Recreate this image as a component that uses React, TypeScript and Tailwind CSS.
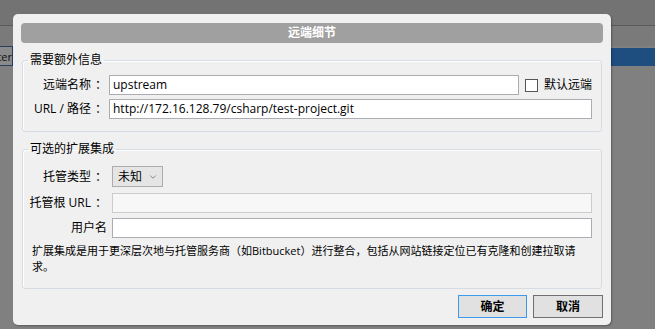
import { ChevronDown } from 'lucide-react';

const font = { fontFamily: '"Open Sans", "Noto Sans CJK SC", sans-serif' };

const Field = ({ value = '', disabled = false, className = '' }: { value?: string; disabled?: boolean; className?: string }) => (
  <div
    className={`h-[20px] border flex items-center pl-[3px] text-[12px] text-black leading-[18px] ${
      disabled ? 'bg-[#f7f7f7] border-[#cccccc]' : 'bg-white border-[#abadb3]'
    } ${className}`}
  >
    {value}
  </div>
);

const Label = ({ text, colon = true }: { text: string; colon?: boolean }) => (
  <div className="w-[84px] text-right leading-[16px] whitespace-nowrap">
    {text}
    {colon && <span className="pl-[4px]">：</span>}
  </div>
);

export default function App() {
  return (
    <div
      className="relative w-[655px] h-[329px] overflow-hidden bg-[#808080] text-[12px] text-black"
      style={font}
    >
      {/* window behind the dialog */}
      <div className="h-[26px] bg-[#737373] border-b border-[#5a5a5a]" />
      <div className="h-[20px] bg-[#7a7a7a]" />
      <div className="flex h-[20px]">
        <div className="w-[13px] bg-[#8a8a8a] border border-l-0 border-[#22415f] overflow-hidden flex items-center justify-end text-[#111] text-[11px] leading-none">
          ter
        </div>
        <div className="flex-1 bg-[#1d4e7f] mt-[2px] h-[18px]" />
      </div>

      {/* dialog */}
      <div className="absolute left-[13px] top-[14px] w-[598px] h-[311px] rounded-[5px] bg-[#f0f0f0] px-[8px] pt-[9px] flex flex-col shadow-[1px_1px_2px_rgba(0,0,0,0.3)]">
        <div className="h-[20px] rounded-[4px] bg-[#a0a0a0] flex items-center justify-center text-white font-bold text-[12px] leading-none">
          远端细节
        </div>

        <fieldset className="mx-[1px] mt-[9px] border border-[#d5dce3] rounded-[3px] shadow-[inset_1px_1px_0_#fff] pb-[12px]">
          <legend className="ml-[5px] px-[2px] leading-[16px]">需要额外信息</legend>
          <div className="flex flex-col gap-[4px] pt-[7px] pr-[9px]">
            <div className="flex items-center">
              <Label text="远端名称" />
              <Field value="upstream" className="ml-[2px] w-[410px]" />
              <div className="ml-[6px] w-[13px] h-[13px] border border-[#555] bg-white" />
              <div className="ml-[6px] leading-[16px]">默认远端</div>
            </div>
            <div className="flex items-center">
              <Label text="URL / 路径" />
              <Field value="http://172.16.128.79/csharp/test-project.git" className="ml-[2px] flex-1" />
            </div>
          </div>
        </fieldset>

        <fieldset className="mx-[1px] mt-[9px] border border-[#d5dce3] rounded-[3px] shadow-[inset_1px_1px_0_#fff] pb-[13px]">
          <legend className="ml-[5px] px-[2px] leading-[16px]">可选的扩展集成</legend>
          <div className="flex flex-col pt-[9px] pr-[9px]">
            <div className="flex items-center">
              <Label text="托管类型" />
              <div className="ml-[5px] w-[51px] h-[21px] border border-[#adadad] bg-[#e5e5e5] flex items-center pl-[5px] pr-[4px]">
                <span className="leading-none">未知</span>
                <ChevronDown className="ml-auto text-[#555]" size={10} strokeWidth={1.5} />
              </div>
            </div>
            <div className="flex items-center mt-[6px]">
              <Label text="托管根 URL" />
              <Field disabled className="ml-[5px] flex-1" />
            </div>
            <div className="flex items-center mt-[5px]">
              <Label text="用户名" colon={false} />
              <Field className="ml-[5px] flex-1" />
            </div>
            <p className="pl-[9px] mt-[5px] text-[11px] leading-[16px]">
              扩展集成是用于更深层次地与托管服务商（如Bitbucket）进行整合，包括从网站链接定位已有克隆和创建拉取请
              <br />
              求。
            </p>
          </div>
        </fieldset>

        <div className="flex justify-end gap-[6px] mt-[6px]">
          <button className="w-[69px] h-[23px] border border-[#3c99ee] bg-[#e1e1e1] font-bold leading-none">
            确定
          </button>
          <button className="w-[70px] h-[23px] border border-[#707070] bg-[#e1e1e1] font-bold leading-none">
            取消
          </button>
        </div>
      </div>
    </div>
  );
}
